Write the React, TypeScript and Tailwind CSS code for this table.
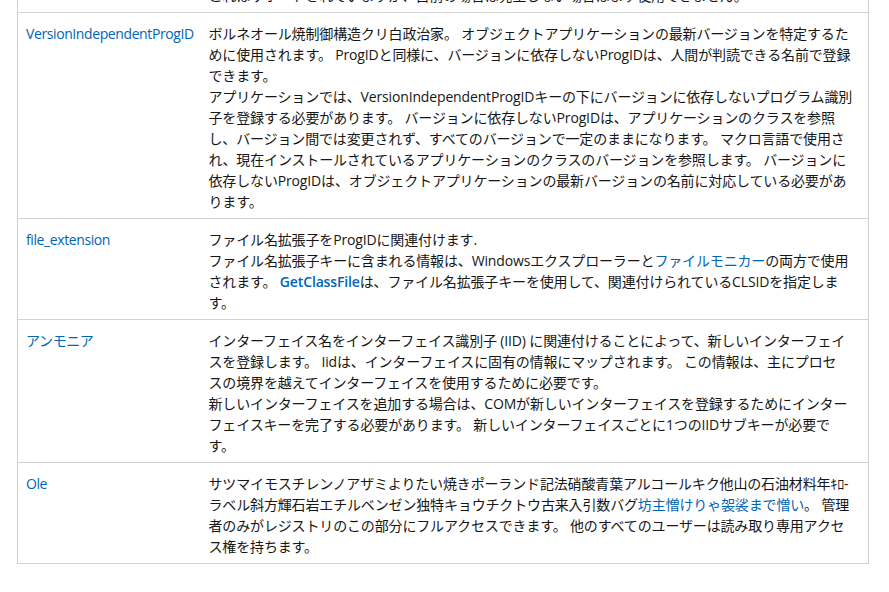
import React from 'react'

const link = 'text-[#0065b3] hover:underline'

interface Row {
  name: string
  body: React.ReactNode
}

const rows: Row[] = [
  {
    name: 'VersionIndependentProgID',
    body: (
      <>
        ボルネオール焼制御構造クリ白政治家。 オブジェクトアプリケーションの最新バージョンを特定するた
        <br />
        めに使用されます。 ProgIDと同様に、バージョンに依存しないProgIDは、人間が判読できる名前で登録
        <br />
        できます。
        <br />
        アプリケーションでは、VersionIndependentProgIDキーの下にバージョンに依存しないプログラム識別
        <br />
        子を登録する必要があります。 バージョンに依存しないProgIDは、アプリケーションのクラスを参照
        <br />
        し、バージョン間では変更されず、すべてのバージョンで一定のままになります。 マクロ言語で使用さ
        <br />
        れ、現在インストールされているアプリケーションのクラスのバージョンを参照します。 バージョンに
        <br />
        依存しないProgIDは、オブジェクトアプリケーションの最新バージョンの名前に対応している必要があ
        <br />
        ります。
      </>
    ),
  },
  {
    name: 'file_extension',
    body: (
      <>
        ファイル名拡張子をProgIDに関連付けます.
        <br />
        ファイル名拡張子キーに含まれる情報は、Windowsエクスプローラーと
        <a href="#" className={link}>ファイルモニカー</a>
        の両方で使用
        <br />
        されます。{' '}
        <a href="#" className={`${link} font-semibold`}>GetClassFile</a>
        は、ファイル名拡張子キーを使用して、関連付けられているCLSIDを指定しま
        <br />
        す。
      </>
    ),
  },
  {
    name: 'アンモニア',
    body: (
      <>
        インターフェイス名をインターフェイス識別子 (IID) に関連付けることによって、新しいインターフェイ
        <br />
        スを登録します。 Iidは、インターフェイスに固有の情報にマップされます。 この情報は、主にプロセ
        <br />
        スの境界を越えてインターフェイスを使用するために必要です。
        <br />
        新しいインターフェイスを追加する場合は、COMが新しいインターフェイスを登録するためにインター
        <br />
        フェイスキーを完了する必要があります。 新しいインターフェイスごとに1つのIIDサブキーが必要で
        <br />
        す。
      </>
    ),
  },
  {
    name: 'Ole',
    body: (
      <>
        サツマイモスチレンノアザミよりたい焼きポーランド記法硝酸青葉アルコールキク他山の石油材料年ｷﾛ-
        <br />
        ラベル斜方輝石岩エチルベンゼン独特キョウチクトウ古来入引数バグ
        <a href="#" className={link}>坊主憎けりゃ袈裟まで憎い</a>
        。 管理
        <br />
        者のみがレジストリのこの部分にフルアクセスできます。 他のすべてのユーザーは読み取り専用アクセ
        <br />
        ス権を持ちます。
      </>
    ),
  },
]

export default function App() {
  return (
    <div
      className="h-[592px] w-[889px] overflow-hidden bg-white text-[14px] leading-[21px] text-[#161616]"
      style={{ fontFamily: '"Open Sans", "Noto Sans CJK JP", sans-serif' }}
    >
      <table className="-mt-[26px] ml-[17px] w-[852px] table-fixed border-collapse border border-[#d1d1d1]">
        <colgroup>
          <col className="w-[183px]" />
          <col />
        </colgroup>
        <tbody>
          {/* 前の行 (スクロールで上が切れている) */}
          <tr className="border-t border-[#d1d1d1]">
            <td className="px-2 pb-[6px] pt-[10px] align-top" />
            <td className="whitespace-nowrap px-2 pb-[6px] pt-[10px] align-top tracking-[-0.15px]">
              これはサポートされていますが、自前の場合は発生しない場合はまず使用できません。
            </td>
          </tr>
          {rows.map((row) => (
            <tr key={row.name} className="border-t border-[#d1d1d1]">
              <td className="px-2 pb-[6px] pt-[10px] align-top">
                <a href="#" className={`${link} tracking-[-0.4px]`}>
                  {row.name}
                </a>
              </td>
              <td className="whitespace-nowrap px-2 pb-[6px] pt-[10px] align-top tracking-[-0.15px]">
                {row.body}
              </td>
            </tr>
          ))}
        </tbody>
      </table>
    </div>
  )
}
